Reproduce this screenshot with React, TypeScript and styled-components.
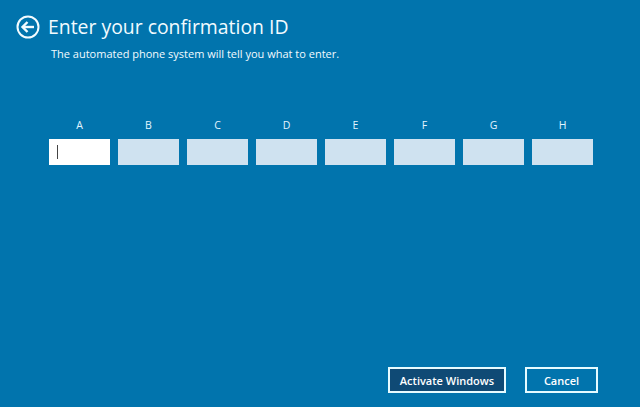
import React from 'react';
import styled, { createGlobalStyle } from 'styled-components';

const GlobalStyle = createGlobalStyle`
  html, body {
    margin: 0;
    padding: 0;
    background: #0174ad;
  }
`;

const Page = styled.div`
  width: 640px;
  height: 407px;
  box-sizing: border-box;
  padding: 15px 42px 14px 16px;
  background: #0174ad;
  color: #fff;
  font-family: 'Open Sans', 'Liberation Sans', sans-serif;
  display: flex;
  flex-direction: column;
  overflow: hidden;
`;

const Header = styled.div`
  display: flex;
  align-items: center;
  gap: 8px;
  height: 24px;
`;

const BackButton = styled.svg`
  width: 24px;
  height: 24px;
  flex: none;
`;

const Title = styled.h1`
  margin: 0;
  font-size: 19.4px;
  font-weight: 400;
  line-height: 24px;
  color: #f2fbff;
`;

const Subtitle = styled.p`
  margin: 7px 0 0 35px;
  font-size: 11px;
  line-height: 15px;
  color: #f2fbff;
`;

const Fields = styled.div`
  margin: 57px 0 0 33px;
  display: grid;
  grid-template-columns: repeat(8, 61px);
  column-gap: 8px;
`;

const Field = styled.label`
  display: flex;
  flex-direction: column;
  align-items: center;
  gap: 7px;
  font-size: 10.5px;
  line-height: 14px;
  color: #e4f5ff;
`;

const Box = styled.div<{ $active?: boolean }>`
  width: 61px;
  height: 26px;
  box-sizing: border-box;
  padding: 6px 8px;
  background: ${(p) => (p.$active ? '#ffffff' : '#cfe2f0')};
`;

const Caret = styled.div`
  width: 1px;
  height: 14px;
  background: #444;
`;

const Footer = styled.div`
  margin-top: auto;
  display: flex;
  justify-content: flex-end;
  gap: 19px;
`;

const Button = styled.button<{ $primary?: boolean }>`
  height: 26px;
  width: ${(p) => (p.$primary ? '118px' : '73px')};
  padding: 0;
  border: 2px solid #e6fbff;
  background: ${(p) => (p.$primary ? '#0f4a75' : '#0174ad')};
  color: #fff;
  font-family: inherit;
  font-size: 11px;
  font-weight: 600;
`;

const labels = ['A', 'B', 'C', 'D', 'E', 'F', 'G', 'H'];

export default function App() {
  return (
    <>
      <GlobalStyle />
      <Page>
        <Header>
          <BackButton viewBox="0 0 24 24" fill="none">
            <circle cx="12" cy="12" r="10.5" stroke="#f2fbff" strokeWidth="2" />
            <path d="M18 12H7" stroke="#f2fbff" strokeWidth="2.4" />
            <path d="M11.5 7L6.5 12L11.5 17" stroke="#f2fbff" strokeWidth="2.4" />
          </BackButton>
          <Title>Enter your confirmation ID</Title>
        </Header>
        <Subtitle>The automated phone system will tell you what to enter.</Subtitle>
        <Fields>
          {labels.map((label, i) => (
            <Field key={label}>
              {label}
              <Box $active={i === 0}>{i === 0 && <Caret />}</Box>
            </Field>
          ))}
        </Fields>
        <Footer>
          <Button $primary>Activate Windows</Button>
          <Button>Cancel</Button>
        </Footer>
      </Page>
    </>
  );
}
